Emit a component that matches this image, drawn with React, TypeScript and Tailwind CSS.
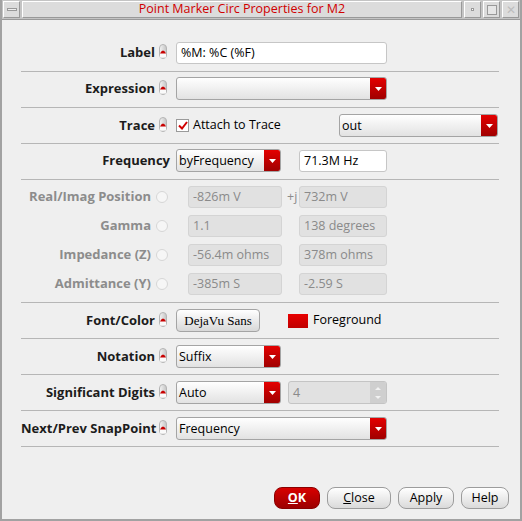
import React from "react";

const Ind = () => (
  <svg width="10" height="16" viewBox="0 0 10 16" className="block">
    <defs>
      <linearGradient id="cap" x1="0" y1="0" x2="1" y2="0">
        <stop offset="0" stopColor="#f4f4f4" />
        <stop offset="1" stopColor="#c4c4c4" />
      </linearGradient>
    </defs>
    <rect x="1.5" y="0.5" width="7" height="14" rx="3.5" fill="url(#cap)" stroke="#b4b4b4" />
    <path d="M2 9 L2 13.5 L8 13.5 L8 9 Z" fill="#fafafa" />
    <path d="M2 9.5 Q5 3.5 8 9.5 Z" fill="#c80000" />
  </svg>
);

const Radio = () => (
  <svg width="12" height="12" viewBox="0 0 12 12" className="block">
    <circle cx="6" cy="6" r="5.5" fill="#f6f6f6" stroke="#d6d6d6" />
  </svg>
);

const Arrow = () => (
  <svg width="7" height="4" viewBox="0 0 7 4" className="block">
    <path d="M0 0h7L3.5 4z" fill="#fff" />
  </svg>
);

const Combo = ({ w, text }: { w: string; text: string }) => (
  <div className={`flex h-[23px] ${w} overflow-hidden rounded-[3px] border border-[#a4a4a4] bg-linear-to-b from-white to-[#e2e2e2]`}>
    <span className="flex-1 pl-[2px] text-[12.5px] leading-[21px] text-black">{text}</span>
    <span className="flex w-[16px] items-center justify-center bg-linear-to-b from-[#e40000] to-[#a00000]">
      <Arrow />
    </span>
  </div>
);

const Field = ({ w, text, off }: { w: string; text: string; off?: boolean }) => (
  <div
    className={`h-[22px] ${w} rounded-[3px] border pl-[4px] text-[12.5px] leading-[20px] ${
      off ? "border-[#d4d4d4] bg-[#e1e1e1] text-[#8a8a8a]" : "border-[#c6c6c6] bg-white text-black"
    }`}
  >
    {text}
  </div>
);

const Lbl = ({ text }: { text: string }) => (
  <div className="w-[134px] whitespace-nowrap text-right text-[13px] font-bold text-[#1c1c1c]">{text}</div>
);

const Row = ({ label, children, cls }: { label: string; children: React.ReactNode; cls: string }) => (
  <div className={`flex items-center border-b border-[#b6b6b6] ${cls}`}>
    <Lbl text={label} />
    <div className="ml-[3px] -mt-[2px]">
      <Ind />
    </div>
    <div className="ml-[8px] flex items-center">{children}</div>
  </div>
);

const OffRow = ({ label, a, b, j }: { label: string; a: string; b: string; j?: boolean }) => (
  <div className="flex h-[22px] items-center">
    <div className="w-[130px] whitespace-nowrap text-right text-[13px] font-bold text-[#8c8c8c]">{label}</div>
    <div className="ml-[5px]">
      <Radio />
    </div>
    <div className="ml-[20px]">
      <Field w="w-[94px]" text={a} off />
    </div>
    <span className="w-[17px] pl-[5px] text-[12.5px] text-[#8c8c8c]">{j ? "+j" : ""}</span>
    <Field w="w-[88px]" text={b} off />
  </div>
);

const Btn = ({ children, w }: { children: React.ReactNode; w: string }) => (
  <div className={`flex h-[22px] ${w} items-center justify-center rounded-[8px] border border-[#9c9c9c] bg-linear-to-b from-white to-[#dadada] text-[12.5px] text-black`}>
    {children}
  </div>
);

export default function App() {
  return (
    <div className="flex h-[521px] w-[522px] flex-col border-x-2 border-b-2 border-[#a2a2a2] bg-[#efefef] font-['Open_Sans',sans-serif]">
      <div className="flex h-[20px] gap-[2px] border-b border-[#9a9a9a] bg-[#c4c4c4] p-[1px]">
        <div className="flex w-[17px] items-center justify-center border border-t-white border-l-white border-b-[#999] border-r-[#999] bg-[#dcdcdc]">
          <div className="h-[3px] w-[10px] border border-[#999] bg-[#eee]" />
        </div>
        <div className="flex flex-1 items-center justify-center border border-t-white border-l-white border-b-[#999] border-r-[#999] bg-[#dcdcdc] text-[12.5px] text-[#d00000]">
          Point Marker Circ Properties for M2
        </div>
        <div className="flex w-[17px] items-center justify-center border border-t-white border-l-white border-b-[#999] border-r-[#999] bg-[#dcdcdc]">
          <div className="h-[3px] w-[3px] border border-[#999] bg-white" />
        </div>
        <div className="flex w-[17px] items-center justify-center border border-t-white border-l-white border-b-[#999] border-r-[#999] bg-[#dcdcdc]">
          <div className="h-[10px] w-[10px] border border-[#999] bg-[#e6e6e6]" />
        </div>
        <div className="flex w-[17px] items-center justify-center border border-t-white border-l-white border-b-[#999] border-r-[#999] bg-[#dcdcdc] text-[12px] leading-none text-[#bdbdbd]">
          ✕
        </div>
      </div>

      <div className="flex flex-1 flex-col pl-[19px] pr-[21px]">
        <Row label="Label" cls="pt-[22px] pb-[7px]">
          <Field w="w-[211px]" text="%M: %C (%F)" />
        </Row>
        <Row label="Expression" cls="pt-[5px] pb-[7px]">
          <Combo w="w-[211px]" text="" />
        </Row>
        <Row label="Trace" cls="pt-[6px] pb-[6px]">
          <div className="flex w-[163px] items-center">
            <span className="flex h-[13px] w-[13px] items-center justify-center border border-[#9a9a9a] bg-white">
              <svg width="10" height="9" viewBox="0 0 10 9">
                <path d="M1 4.5 L4 7.5 L9 1" fill="none" stroke="#d00000" strokeWidth="2" />
              </svg>
            </span>
            <span className="ml-[4px] text-[12.5px] text-black">Attach to Trace</span>
          </div>
          <Combo w="w-[159px]" text="out" />
        </Row>
        <div className="flex items-center border-b border-[#b6b6b6] pt-[5px] pb-[7px]">
          <div className="w-[149px] text-right text-[13px] font-bold text-[#1c1c1c]">Frequency</div>
          <div className="ml-[6px] flex items-center">
            <Combo w="w-[105px]" text="byFrequency" />
            <div className="ml-[18px]">
              <Field w="w-[88px]" text="71.3M Hz" />
            </div>
          </div>
        </div>
        <div className="flex flex-col gap-[7px] border-b border-[#b6b6b6] pt-[6px] pb-[7px]">
          <OffRow label="Real/Imag Position" a="-826m V" b="732m V" j />
          <OffRow label="Gamma" a="1.1" b="138 degrees" />
          <OffRow label="Impedance (Z)" a="-56.4m ohms" b="378m ohms" />
          <OffRow label="Admittance (Y)" a="-385m S" b="-2.59 S" />
        </div>
        <Row label="Font/Color" cls="py-[6px]">
          <div className="flex h-[23px] w-[84px] items-center justify-center rounded-[4px] border border-[#a4a4a4] bg-linear-to-b from-white to-[#d8d8d8] font-['Liberation_Serif',serif] text-[13px] text-black">
            DejaVu Sans
          </div>
          <span className="ml-[28px] h-[14px] w-[20px] bg-linear-to-b from-[#e80000] to-[#c00000]" />
          <span className="ml-[5px] text-[12.5px] text-black">Foreground</span>
        </Row>
        <Row label="Notation" cls="py-[6px]">
          <Combo w="w-[105px]" text="Suffix" />
        </Row>
        <Row label="Significant Digits" cls="py-[6px]">
          <Combo w="w-[105px]" text="Auto" />
          <div className="ml-[7px] flex h-[23px] w-[99px] overflow-hidden rounded-[3px] border border-[#c4c4c4] bg-[#e1e1e1]">
            <span className="flex-1 pl-[4px] text-[12.5px] leading-[21px] text-[#8a8a8a]">4</span>
            <span className="flex w-[16px] flex-col items-center justify-center gap-[6px] bg-[#cfcfcf]">
              <svg width="6" height="3" viewBox="0 0 6 3" className="block">
                <path d="M0 3h6L3 0z" fill="#f2f2f2" />
              </svg>
              <svg width="6" height="3" viewBox="0 0 6 3" className="block">
                <path d="M0 0h6L3 3z" fill="#f2f2f2" />
              </svg>
            </span>
          </div>
        </Row>
        <Row label="Next/Prev SnapPoint" cls="py-[6px]">
          <Combo w="w-[211px]" text="Frequency" />
        </Row>
        <div className="mr-[-10px] flex flex-1 items-end justify-end gap-[7px] pb-[10px]">
          <div className="flex h-[22px] w-[46px] items-center justify-center rounded-[8px] border border-[#8a0000] bg-linear-to-b from-[#d80000] to-[#9c0000] text-[12.5px] font-bold text-white">
            <span className="underline">O</span>K
          </div>
          <Btn w="w-[64px]">
            <span className="underline">C</span>lose
          </Btn>
          <Btn w="w-[56px]">Apply</Btn>
          <Btn w="w-[48px]">Help</Btn>
        </div>
      </div>
    </div>
  );
}
